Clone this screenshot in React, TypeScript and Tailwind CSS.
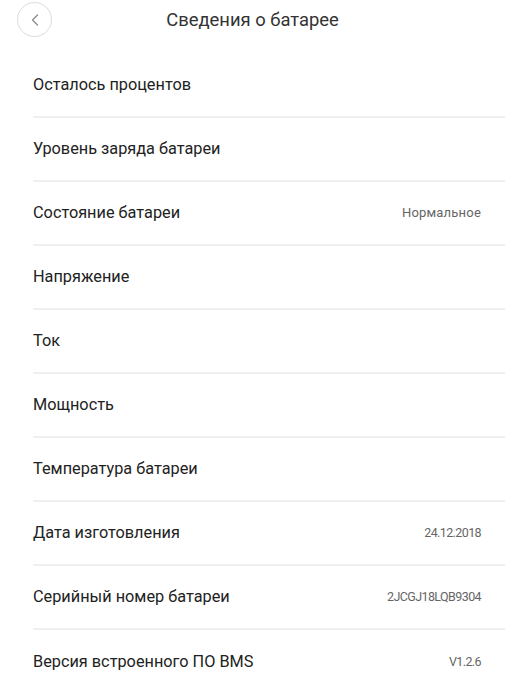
import { ChevronLeft } from "lucide-react";

const rows = [
  { label: "Осталось процентов", value: "", narrow: false },
  { label: "Уровень заряда батареи", value: "", narrow: false },
  { label: "Состояние батареи", value: "Нормальное", narrow: false },
  { label: "Напряжение", value: "", narrow: false },
  { label: "Ток", value: "", narrow: false },
  { label: "Мощность", value: "", narrow: false },
  { label: "Температура батареи", value: "", narrow: false },
  { label: "Дата изготовления", value: "24.12.2018", narrow: true },
  { label: "Серийный номер батареи", value: "2JCGJ18LQB9304", narrow: true },
  { label: "Версия встроенного ПО BMS", value: "V1.2.6", narrow: true },
];

export default function App() {
  return (
    <div
      className="w-[505px] h-[699px] overflow-hidden bg-white text-[#222]"
      style={{ fontFamily: "Roboto, 'Noto Sans', sans-serif" }}
    >
      {/* Header */}
      <header className="relative h-[40px] flex items-center justify-center">
        <button className="absolute left-[17px] top-[2px] w-[35px] h-[35px] rounded-full border border-[#dcdcdc] flex items-center justify-center">
          <ChevronLeft className="w-5 h-5 text-[#8a8a8a]" strokeWidth={1.5} />
        </button>
        <h1 className="text-[18.4px] leading-none text-[#333]">Сведения о батарее</h1>
      </header>

      {/* List */}
      <ul className="mt-[14px] pl-[33px]">
        {rows.map((row, i) => (
          <li
            key={row.label}
            className={
              "h-[64px] flex items-center justify-between pr-[24px] " +
              (i < rows.length - 1 ? "border-b-2 border-[#efefef]" : "")
            }
          >
            <span className="text-[16.3px] text-[#222]">{row.label}</span>
            {row.value && (
              <span
                className={
                  row.narrow
                    ? "text-[12.5px] text-[#666] tracking-[-0.6px]"
                    : "text-[13px] text-[#666] tracking-[0.2px]"
                }
              >
                {row.value}
              </span>
            )}
          </li>
        ))}
      </ul>
    </div>
  );
}
